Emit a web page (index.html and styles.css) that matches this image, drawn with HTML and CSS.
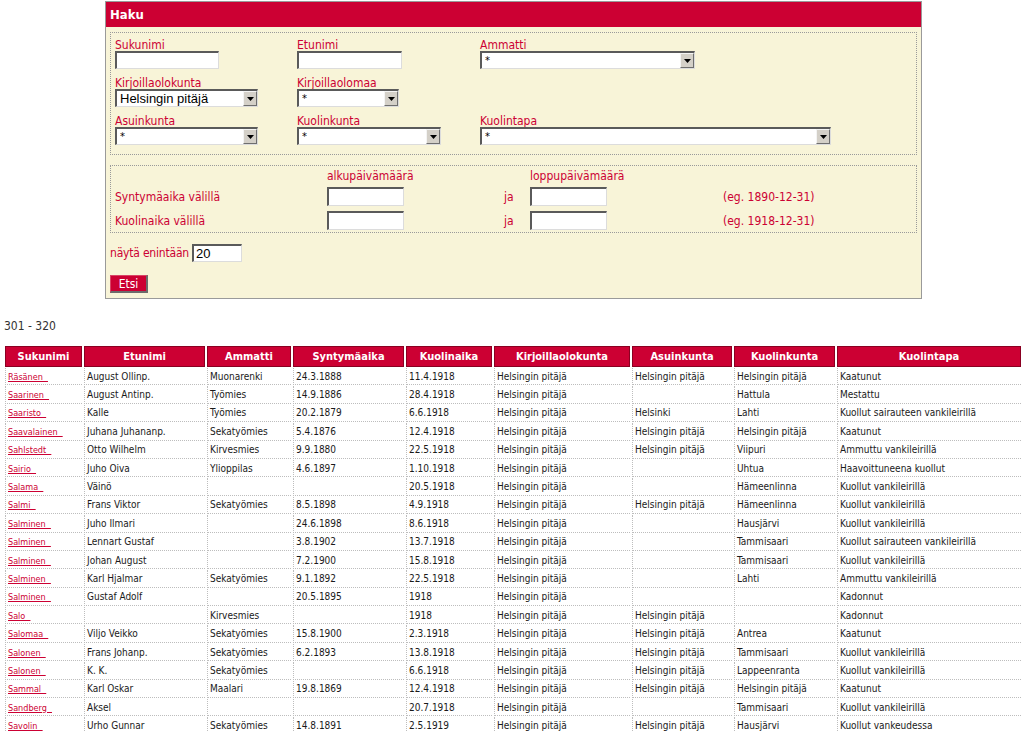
FILE: index.html
```html
<!DOCTYPE html>
<html lang="fi">
<head>
<meta charset="utf-8">
<title>Haku</title>
<link rel="stylesheet" href="styles.css">
</head>
<body>
<form class="search">
  <div class="search-title">Haku</div>
  <div class="search-body">
    <div class="box fields">
      <div class="field"><label class="lbl">Sukunimi</label><input class="txt w-sukunimi" type="text"></div>
      <div class="field"><label class="lbl">Etunimi</label><input class="txt w-etunimi" type="text"></div>
      <div class="field"><label class="lbl">Ammatti</label>
        <span class="sel w-ammatti"><select><option>*</option></select><span class="arrow"><svg width="7" height="4" viewBox="0 0 7 4"><path d="M0 0h7L3.5 4z" fill="#000"/></svg></span></span>
      </div>
      <div class="field"><label class="lbl">Kirjoillaolokunta</label>
        <span class="sel w-kunta"><select class="big"><option>Helsingin pitäjä</option></select><span class="arrow"><svg width="7" height="4" viewBox="0 0 7 4"><path d="M0 0h7L3.5 4z" fill="#000"/></svg></span></span>
      </div>
      <div class="field"><label class="lbl">Kirjoillaolomaa</label>
        <span class="sel w-maa"><select><option>*</option></select><span class="arrow"><svg width="7" height="4" viewBox="0 0 7 4"><path d="M0 0h7L3.5 4z" fill="#000"/></svg></span></span>
      </div>
      <div class="field"></div>
      <div class="field"><label class="lbl">Asuinkunta</label>
        <span class="sel w-kunta"><select><option>*</option></select><span class="arrow"><svg width="7" height="4" viewBox="0 0 7 4"><path d="M0 0h7L3.5 4z" fill="#000"/></svg></span></span>
      </div>
      <div class="field"><label class="lbl">Kuolinkunta</label>
        <span class="sel w-kuolinkunta"><select><option>*</option></select><span class="arrow"><svg width="7" height="4" viewBox="0 0 7 4"><path d="M0 0h7L3.5 4z" fill="#000"/></svg></span></span>
      </div>
      <div class="field"><label class="lbl">Kuolintapa</label>
        <span class="sel w-kuolintapa"><select><option>*</option></select><span class="arrow"><svg width="7" height="4" viewBox="0 0 7 4"><path d="M0 0h7L3.5 4z" fill="#000"/></svg></span></span>
      </div>
    </div>

    <div class="box dates">
      <span></span><span class="lbl head">alkupäivämäärä</span><span></span><span class="lbl head">loppupäivämäärä</span><span></span>
      <span class="lbl">Syntymäaika välillä</span><input class="txt date" type="text"><span class="lbl">ja</span><input class="txt date" type="text"><span class="lbl">(eg. 1890-12-31)</span>
      <span class="lbl">Kuolinaika välillä</span><input class="txt date" type="text"><span class="lbl">ja</span><input class="txt date" type="text"><span class="lbl">(eg. 1918-12-31)</span>
    </div>

    <div class="limit"><span class="lbl">näytä enintään</span><input class="txt num" type="text" value="20"></div>
    <button class="btn" type="button">Etsi</button>
  </div>
</form>

<p class="range">301 - 320</p>

<table class="results">
  <thead>
    <tr>
      <th class="c1">Sukunimi</th><th class="c2">Etunimi</th><th class="c3">Ammatti</th><th class="c4">Syntymäaika</th><th class="c5">Kuolinaika</th><th class="c6">Kirjoillaolokunta</th><th class="c7">Asuinkunta</th><th class="c8">Kuolinkunta</th><th class="c9">Kuolintapa</th>
    </tr>
  </thead>
  <tbody>
    <tr><td><a href="#">Räsänen&nbsp;&nbsp;</a></td><td>August Ollinp.</td><td>Muonarenki</td><td>24.3.1888</td><td>11.4.1918</td><td>Helsingin pitäjä</td><td>Helsingin pitäjä</td><td>Helsingin pitäjä</td><td>Kaatunut</td></tr>
    <tr><td><a href="#">Saarinen&nbsp;&nbsp;</a></td><td>August Antinp.</td><td>Työmies</td><td>14.9.1886</td><td>28.4.1918</td><td>Helsingin pitäjä</td><td></td><td>Hattula</td><td>Mestattu</td></tr>
    <tr><td><a href="#">Saaristo&nbsp;&nbsp;</a></td><td>Kalle</td><td>Työmies</td><td>20.2.1879</td><td>6.6.1918</td><td>Helsingin pitäjä</td><td>Helsinki</td><td>Lahti</td><td>Kuollut sairauteen vankileirillä</td></tr>
    <tr><td><a href="#">Saavalainen&nbsp;&nbsp;</a></td><td>Juhana Juhananp.</td><td>Sekatyömies</td><td>5.4.1876</td><td>12.4.1918</td><td>Helsingin pitäjä</td><td>Helsingin pitäjä</td><td>Helsingin pitäjä</td><td>Kaatunut</td></tr>
    <tr><td><a href="#">Sahlstedt&nbsp;&nbsp;</a></td><td>Otto Wilhelm</td><td>Kirvesmies</td><td>9.9.1880</td><td>22.5.1918</td><td>Helsingin pitäjä</td><td>Helsingin pitäjä</td><td>Viipuri</td><td>Ammuttu vankileirillä</td></tr>
    <tr><td><a href="#">Sairio&nbsp;&nbsp;</a></td><td>Juho Oiva</td><td>Ylioppilas</td><td>4.6.1897</td><td>1.10.1918</td><td>Helsingin pitäjä</td><td></td><td>Uhtua</td><td>Haavoittuneena kuollut</td></tr>
    <tr><td><a href="#">Salama&nbsp;&nbsp;</a></td><td>Väinö</td><td></td><td></td><td>20.5.1918</td><td>Helsingin pitäjä</td><td></td><td>Hämeenlinna</td><td>Kuollut vankileirillä</td></tr>
    <tr><td><a href="#">Salmi&nbsp;&nbsp;</a></td><td>Frans Viktor</td><td>Sekatyömies</td><td>8.5.1898</td><td>4.9.1918</td><td>Helsingin pitäjä</td><td>Helsingin pitäjä</td><td>Hämeenlinna</td><td>Kuollut vankileirillä</td></tr>
    <tr><td><a href="#">Salminen&nbsp;&nbsp;</a></td><td>Juho Ilmari</td><td></td><td>24.6.1898</td><td>8.6.1918</td><td>Helsingin pitäjä</td><td></td><td>Hausjärvi</td><td>Kuollut vankileirillä</td></tr>
    <tr><td><a href="#">Salminen&nbsp;&nbsp;</a></td><td>Lennart Gustaf</td><td></td><td>3.8.1902</td><td>13.7.1918</td><td>Helsingin pitäjä</td><td></td><td>Tammisaari</td><td>Kuollut sairauteen vankileirillä</td></tr>
    <tr><td><a href="#">Salminen&nbsp;&nbsp;</a></td><td>Johan August</td><td></td><td>7.2.1900</td><td>15.8.1918</td><td>Helsingin pitäjä</td><td></td><td>Tammisaari</td><td>Kuollut vankileirillä</td></tr>
    <tr><td><a href="#">Salminen&nbsp;&nbsp;</a></td><td>Karl Hjalmar</td><td>Sekatyömies</td><td>9.1.1892</td><td>22.5.1918</td><td>Helsingin pitäjä</td><td></td><td>Lahti</td><td>Ammuttu vankileirillä</td></tr>
    <tr><td><a href="#">Salminen&nbsp;&nbsp;</a></td><td>Gustaf Adolf</td><td></td><td>20.5.1895</td><td>1918</td><td>Helsingin pitäjä</td><td></td><td></td><td>Kadonnut</td></tr>
    <tr><td><a href="#">Salo&nbsp;&nbsp;</a></td><td></td><td>Kirvesmies</td><td></td><td>1918</td><td>Helsingin pitäjä</td><td>Helsingin pitäjä</td><td></td><td>Kadonnut</td></tr>
    <tr><td><a href="#">Salomaa&nbsp;&nbsp;</a></td><td>Viljo Veikko</td><td>Sekatyömies</td><td>15.8.1900</td><td>2.3.1918</td><td>Helsingin pitäjä</td><td>Helsingin pitäjä</td><td>Antrea</td><td>Kaatunut</td></tr>
    <tr><td><a href="#">Salonen&nbsp;&nbsp;</a></td><td>Frans Johanp.</td><td>Sekatyömies</td><td>6.2.1893</td><td>13.8.1918</td><td>Helsingin pitäjä</td><td>Helsingin pitäjä</td><td>Tammisaari</td><td>Kuollut vankileirillä</td></tr>
    <tr><td><a href="#">Salonen&nbsp;&nbsp;</a></td><td>K. K.</td><td>Sekatyömies</td><td></td><td>6.6.1918</td><td>Helsingin pitäjä</td><td>Helsingin pitäjä</td><td>Lappeenranta</td><td>Kuollut vankileirillä</td></tr>
    <tr><td><a href="#">Sammal&nbsp;&nbsp;</a></td><td>Karl Oskar</td><td>Maalari</td><td>19.8.1869</td><td>12.4.1918</td><td>Helsingin pitäjä</td><td>Helsingin pitäjä</td><td>Helsingin pitäjä</td><td>Kaatunut</td></tr>
    <tr><td><a href="#">Sandberg&nbsp;&nbsp;</a></td><td>Aksel</td><td></td><td></td><td>20.7.1918</td><td>Helsingin pitäjä</td><td></td><td>Tammisaari</td><td>Kuollut vankileirillä</td></tr>
    <tr><td><a href="#">Savolin&nbsp;&nbsp;</a></td><td>Urho Gunnar</td><td>Sekatyömies</td><td>14.8.1891</td><td>2.5.1919</td><td>Helsingin pitäjä</td><td>Helsingin pitäjä</td><td>Hausjärvi</td><td>Kuollut vankeudessa</td></tr>
  </tbody>
</table>
</body>
</html>
```

FILE: styles.css
```css
* { box-sizing: border-box; }

body {
  margin: 0;
  background: #fff;
  color: #222;
  font-family: "DejaVu Sans Condensed", "DejaVu Sans", sans-serif;
  font-stretch: condensed;
  font-size: 12px;
}

/* ---------- search box ---------- */
.search {
  width: 817px;
  margin: 1px 0 0 105px;
  border: 1px solid #9a9a9a;
  background: #f8f4d8;
}

.search-title {
  height: 25px;
  line-height: 25px;
  padding-left: 4px;
  background: #cc0033;
  color: #fff;
  font-weight: bold;
  font-size: 13px;
}

.search-body {
  padding: 5px 4px 5px;
}

.box {
  border: 1px dotted #9a9a9a;
}

.lbl {
  color: #cc0033;
  font-size: 12px;
  line-height: 14px;
  white-space: nowrap;
}

.fields {
  display: grid;
  grid-template-columns: 182px 183px 1fr;
  row-gap: 6px;
  padding: 4px 4px 9px;
}

.field {
  display: flex;
  flex-direction: column;
  align-items: flex-start;
}

.field .lbl {
  display: block;
  height: 14px;
  line-height: 16px;
}

.txt {
  height: 18px;
  margin: 0;
  padding: 0 2px;
  border-style: solid;
  border-width: 2px 1px 1px 2px;
  border-color: #5a5a5a #dcdcdc #dcdcdc #5a5a5a;
  background: #fff;
  font-family: "Liberation Sans", Arial, sans-serif;
  font-size: 13px;
  color: #000;
  outline: none;
}

.w-sukunimi { width: 104px; }
.w-etunimi { width: 105px; }

.sel {
  position: relative;
  display: block;
  height: 18px;
}

.sel select {
  -webkit-appearance: none;
  appearance: none;
  display: block;
  width: 100%;
  height: 18px;
  margin: 0;
  padding: 0 0 0 3px;
  border-style: solid;
  border-width: 2px 1px 1px 2px;
  border-color: #5a5a5a #dcdcdc #dcdcdc #5a5a5a;
  border-radius: 0;
  background: #fff;
  color: #000;
  font-family: "DejaVu Sans Condensed", "DejaVu Sans", sans-serif;
  font-size: 11px;
  line-height: 15px;
}

.sel select.big {
  font-family: "Liberation Sans", Arial, sans-serif;
  font-size: 13px;
}

.sel .arrow {
  position: absolute;
  top: 2px;
  right: 1px;
  width: 14px;
  height: 15px;
  display: flex;
  align-items: center;
  justify-content: center;
  background: #d4d0c8;
  border-style: solid;
  border-width: 1px;
  border-color: #f4f4f4 #6e6e6e #6e6e6e #f4f4f4;
}

.sel .arrow svg { display: block; }

.w-ammatti { width: 215px; }
.w-kunta { width: 143px; }
.w-maa { width: 102px; }
.w-kuolinkunta { width: 144px; }
.w-kuolintapa { width: 351px; }

/* ---------- dates ---------- */
.dates {
  margin-top: 10px;
  display: grid;
  grid-template-columns: 212px 177px 26px 193px 1fr;
  grid-template-rows: 14px 19px 19px;
  row-gap: 5px;
  align-items: center;
  padding: 2px 4px 2px;
}

.dates .lbl.head {
  align-self: start;
  line-height: 17px;
}

.txt.date {
  width: 77px;
  height: 19px;
}

.limit {
  margin-top: 11px;
  display: flex;
  align-items: center;
  gap: 3px;
}

.limit .lbl { letter-spacing: -0.2px; }

.txt.num {
  width: 50px;
  height: 18px;
}

.btn {
  display: block;
  margin-top: 13px;
  width: 38px;
  height: 18px;
  padding: 0;
  border-style: solid;
  border-width: 1px 2px 2px 1px;
  border-color: #d84466 #6b6b6b #6b6b6b #d84466;
  background: #cc0033;
  color: #fff;
  font-family: "DejaVu Sans Condensed", "DejaVu Sans", sans-serif;
  font-stretch: condensed;
  font-size: 12px;
  line-height: 14px;
}

/* ---------- results ---------- */
.range {
  margin: 20px 0 0 4px;
  font-size: 12px;
  line-height: 14px;
  color: #333;
}

.results {
  margin: 12px 0 0 3px;
  width: 1020px;
  table-layout: fixed;
  border-collapse: separate;
  border-spacing: 2px 1px;
  font-size: 10px;
}

.results th {
  height: 21px;
  padding: 0;
  border: 1px solid #8a0022;
  background: #cc0033;
  color: #fff;
  font-weight: bold;
  font-size: 11px;
  text-align: center;
  white-space: nowrap;
}

.c1 { width: 77px; }
.c2 { width: 121px; }
.c3 { width: 84px; }
.c4 { width: 111px; }
.c5 { width: 86px; }
.c6 { width: 136px; }
.c7 { width: 100px; }
.c8 { width: 101px; }
.c9 { width: 184px; }

.results td {
  height: 17.4px;
  padding: 0 2px;
  border-left: 1px dotted #bdbdbd;
  border-bottom: 1px dotted #bdbdbd;
  color: #1a1a1a;
  white-space: nowrap;
  overflow: hidden;
  vertical-align: middle;
}

.results td a {
  color: #cc0033;
  font-size: 9px;
  text-decoration: underline;
}
```
